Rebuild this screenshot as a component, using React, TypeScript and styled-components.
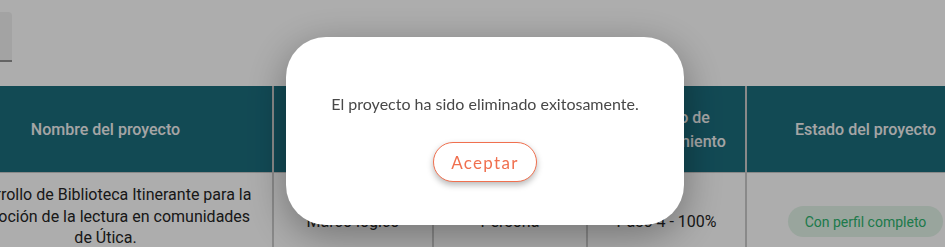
import React from 'react';
import styled, { createGlobalStyle } from 'styled-components';

const GlobalStyle = createGlobalStyle`
  html, body {
    margin: 0;
    padding: 0;
    background: #ffffff;
    overflow: hidden;
  }
  body {
    width: 945px;
    height: 247px;
  }
`;

const Page = styled.div`
  margin-left: -61px;
  padding-top: 12px;
  font-family: Roboto, 'Liberation Sans', sans-serif;
`;

const FilterField = styled.div`
  width: 73px;
  height: 48px;
  background: #f0f0f0;
  border-radius: 4px 4px 0 0;
  border-bottom: 2px solid #949494;
`;

const Table = styled.table`
  margin-top: 24px;
  border-collapse: collapse;
  table-layout: fixed;
  width: 1046px;
`;

const HeadCell = styled.th<{ $w: number }>`
  width: ${(p) => p.$w}px;
  height: 86px;
  padding: 3px 12px 0;
  box-sizing: border-box;
  background: #1b6d7d;
  color: #f4f4f4;
  font-size: 16px;
  font-weight: 500;
  line-height: 24px;
  text-align: center;
  vertical-align: middle;
  border-right: 2px solid #cbcbcb;
  border-bottom: 1px solid #cbcbcb;
`;

const Cell = styled.td<{ $lift?: boolean }>`
  height: 98px;
  padding: 0 16px ${(p) => (p.$lift ? '10px' : '0')};
  box-sizing: border-box;
  color: #252525;
  font-size: 16px;
  line-height: 21.5px;
  text-align: center;
  vertical-align: middle;
  border-right: 2px solid #cbcbcb;
`;

const StatusPill = styled.span`
  display: inline-block;
  padding: 6px 17px 5px;
  border-radius: 16px;
  background: #e2f3e8;
  color: #2cb46e;
  font-size: 14px;
  line-height: 20px;
`;

const Overlay = styled.div`
  position: fixed;
  inset: 0;
  background: rgba(0, 0, 0, 0.32);
  display: flex;
  justify-content: center;
  align-items: flex-start;
  padding: 37px 0 0 25px;
  box-sizing: border-box;
`;

const Modal = styled.div`
  width: 398px;
  height: 188px;
  box-sizing: border-box;
  padding-top: 55px;
  background: #ffffff;
  border-radius: 40px;
  box-shadow: 0 10px 40px rgba(0, 0, 0, 0.35);
  display: flex;
  flex-direction: column;
  align-items: center;
  font-family: Lato, 'Liberation Sans', sans-serif;
`;

const Message = styled.p`
  margin: 0;
  font-size: 16px;
  line-height: 24px;
  color: #484848;
`;

const AcceptButton = styled.button`
  margin-top: 26px;
  width: 104px;
  height: 40px;
  border: 1.5px solid #f0704f;
  border-radius: 20px;
  background: #ffffff;
  color: #f0704f;
  font-family: Lato, 'Liberation Sans', sans-serif;
  font-size: 17px;
  letter-spacing: 1.3px;
  box-shadow: 0 3px 6px rgba(0, 0, 0, 0.28);
  cursor: pointer;
`;

const columns = [
  { title: 'Nombre del proyecto', w: 334 },
  { title: 'Metodología', w: 160 },
  { title: 'Tipo de beneficiario', w: 154 },
  { title: 'Progreso de diligenciamiento', w: 159 },
  { title: 'Estado del proyecto', w: 239 },
];

const App = () => (
  <>
    <GlobalStyle />
    <Page>
      <FilterField />
      <Table>
        <thead>
          <tr>
            {columns.map((c) => (
              <HeadCell key={c.title} $w={c.w}>
                {c.title}
              </HeadCell>
            ))}
          </tr>
        </thead>
        <tbody>
          <tr>
            <Cell $lift>
              Desarrollo de Biblioteca Itinerante para la promoción de la
              lectura en comunidades de Útica.
            </Cell>
            <Cell>Marco lógico</Cell>
            <Cell>Persona</Cell>
            <Cell>Paso 4 - 100%</Cell>
            <Cell>
              <StatusPill>Con perfil completo</StatusPill>
            </Cell>
          </tr>
        </tbody>
      </Table>
    </Page>
    <Overlay>
      <Modal>
        <Message>El proyecto ha sido eliminado exitosamente.</Message>
        <AcceptButton>Aceptar</AcceptButton>
      </Modal>
    </Overlay>
  </>
);

export default App;
